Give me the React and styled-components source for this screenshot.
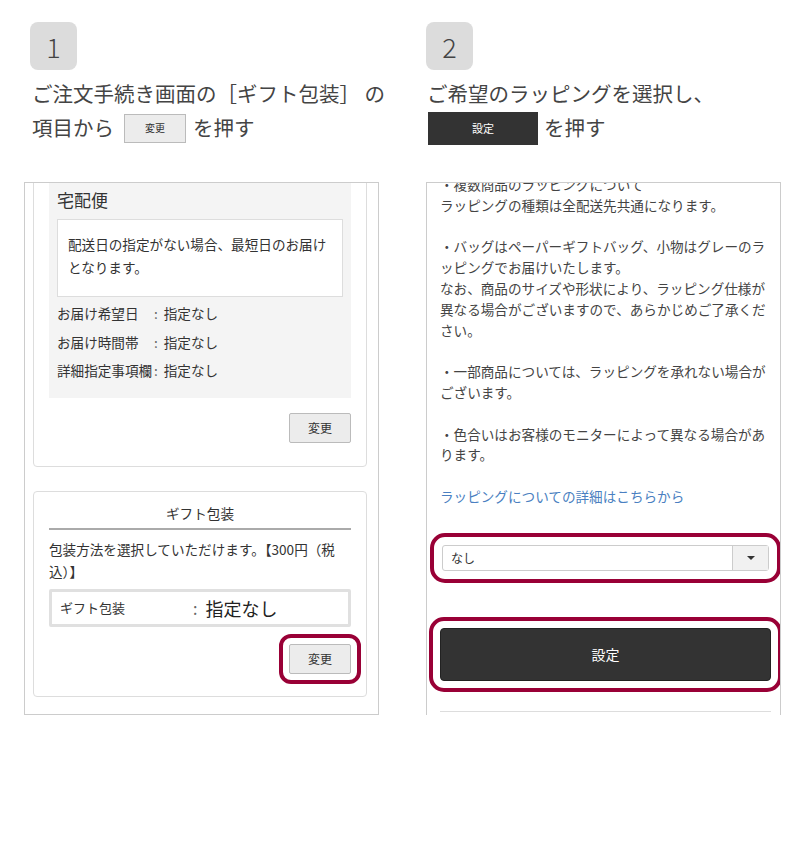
import styled, { createGlobalStyle } from 'styled-components';

const GlobalStyle = createGlobalStyle`
  body {
    margin: 0;
    background: #fff;
    font-family: "Noto Sans CJK JP", "Noto Sans", sans-serif;
    color: #333;
  }
`;

const Page = styled.div`
  display: flex;
  gap: 47px;
  padding: 22px 0 0 24px;
  width: 800px;
  height: 853px;
  box-sizing: border-box;
`;

const Column = styled.div`
  width: 355px;
  display: flex;
  flex-direction: column;
`;

const StepBadge = styled.div`
  width: 47px;
  height: 48px;
  margin-left: ${(props) => props.offset || 0}px;
  border-radius: 8px;
  background: #dcdcdc;
  color: #444;
  font-size: 27px;
  font-weight: 300;
  display: flex;
  align-items: center;
  justify-content: center;
`;

const StepText = styled.div`
  margin: 6px 0 0 ${(props) => props.offset || 0}px;
  font-size: 20.5px;
  line-height: 34px;
  color: #444;
  white-space: nowrap;
  height: 68px;
`;

const InlineButton = styled.span`
  display: inline-flex;
  align-items: center;
  justify-content: center;
  vertical-align: middle;
  box-sizing: border-box;
  font-size: 11px;
  line-height: 1;
  position: relative;
  top: -2px;
  ${(props) =>
    props.dark
      ? `
    width: 110px;
    height: 33px;
    margin: 0 6px 0 1px;
    background: #333;
    color: #fff;
  `
      : `
    width: 62px;
    height: 29px;
    margin: 0 7px 0 10px;
    background: #ececec;
    border: 1px solid #bbb;
    color: #333;
    font-size: 10px;
  `}
`;

const Panel = styled.div`
  margin-top: 38px;
  height: 533px;
  box-sizing: border-box;
  border: 1px solid #ccc;
  border-bottom: ${(props) => (props.open ? 'none' : '1px solid #ccc')};
  overflow: hidden;
  padding: ${(props) => props.pad};
`;

const Card = styled.div`
  border: 1px solid #ddd;
  border-radius: 4px;
  padding: ${(props) => props.pad || '15px'};
  margin-top: ${(props) => props.top || 0}px;
`;

const GrayBox = styled.div`
  background: #f4f4f4;
  padding: 8px 8px 13px;
`;

const ShipTitle = styled.div`
  font-size: 17px;
  line-height: 26px;
  margin-bottom: 6px;
`;

const Notice = styled.div`
  background: #fff;
  border: 1px solid #ddd;
  padding: 13px 10px 17px;
  font-size: 13.6px;
  line-height: 23px;
`;

const InfoRows = styled.div`
  margin-top: 2px;
`;

const InfoRow = styled.div`
  display: flex;
  font-size: 13.6px;
  line-height: 28.5px;
`;

const InfoLabel = styled.span`
  width: 97px;
`;

const Colon = styled.span`
  color: #666;
  margin-right: ${(props) => props.gap || 6}px;
`;

const ButtonRow = styled.div`
  display: flex;
  justify-content: flex-end;
  margin-top: ${(props) => props.top}px;
`;

const ChangeButton = styled.button`
  width: 62px;
  height: 30px;
  box-sizing: border-box;
  border: 1px solid #bbb;
  border-radius: 2px;
  background: #ececec;
  color: #333;
  font-family: inherit;
  font-size: 12px;
  padding: 0;
  ${(props) => props.marked && 'outline: 4px solid #990036; outline-offset: 6px;'}
`;

const CardTitle = styled.div`
  text-align: center;
  font-size: 13.6px;
  line-height: 20px;
  padding-bottom: 5px;
  border-bottom: 2px solid #aaa;
`;

const CardText = styled.div`
  margin-top: 8px;
  font-size: 13.6px;
  line-height: 22px;
`;

const SelectedBox = styled.div`
  margin-top: 7px;
  height: 38px;
  box-sizing: border-box;
  border: 3px solid #e0e0e0;
  border-radius: 2px;
  display: flex;
  align-items: center;
  padding: 0 8px;
`;

const SelectedLabel = styled.span`
  width: 133px;
  font-size: 13px;
`;

const SelectedValue = styled.span`
  font-size: 18px;
  color: #222;
`;

const NoteText = styled.div`
  margin-top: -9px;
  font-size: 13.6px;
  line-height: 20.8px;
  color: #444;
  white-space: nowrap;
`;

const Link = styled.a`
  color: #4a7fc1;
  text-decoration: none;
`;

const SelectBox = styled.div`
  margin: 38px 2px 0;
  height: 26px;
  box-sizing: border-box;
  border: 1px solid #ccc;
  border-radius: 3px;
  display: flex;
  background: #fff;
  outline: 4px solid #990036;
  outline-offset: 8px;
`;

const SelectValue = styled.span`
  flex: 1;
  font-size: 12px;
  line-height: 24px;
  padding-left: 8px;
  color: #333;
`;

const SelectCaret = styled.span`
  width: 35px;
  border-left: 1px solid #ccc;
  background: #f1f1f1;
  display: flex;
  align-items: center;
  justify-content: center;

  &::after {
    content: '';
    border-left: 4px solid transparent;
    border-right: 4px solid transparent;
    border-top: 4px solid #333;
  }
`;

const SubmitButton = styled.button`
  display: block;
  width: 100%;
  height: 53px;
  margin-top: 57px;
  border: 1px solid #222;
  border-radius: 4px;
  background: #333;
  color: #fff;
  font-family: inherit;
  font-size: 14px;
  outline: 4px solid #990036;
  outline-offset: 7px;
`;

const Divider = styled.div`
  margin-top: 30px;
  border-top: 1px solid #ddd;
`;

const App = () => {
  return (
    <>
      <GlobalStyle />
      <Page>
        <Column>
          <StepBadge offset={6}>1</StepBadge>
          <StepText offset={8}>
            ご注文手続き画面の［ギフト包装］ の
            <br />
            項目から<InlineButton>変更</InlineButton>を押す
          </StepText>
          <Panel pad="0 11px 0 8px">
            <Card top={-20} pad="15px 15px 23px">
              <GrayBox>
                <ShipTitle>宅配便</ShipTitle>
                <Notice>
                  配送日の指定がない場合、最短日のお届け
                  <br />
                  となります。
                </Notice>
                <InfoRows>
                  <InfoRow>
                    <InfoLabel>お届け希望日</InfoLabel>
                    <Colon>:</Colon>指定なし
                  </InfoRow>
                  <InfoRow>
                    <InfoLabel>お届け時間帯</InfoLabel>
                    <Colon>:</Colon>指定なし
                  </InfoRow>
                  <InfoRow>
                    <InfoLabel>詳細指定事項欄</InfoLabel>
                    <Colon>:</Colon>指定なし
                  </InfoRow>
                </InfoRows>
              </GrayBox>
              <ButtonRow top={15}>
                <ChangeButton>変更</ChangeButton>
              </ButtonRow>
            </Card>
            <Card top={24} pad="11px 15px 22px">
              <CardTitle>ギフト包装</CardTitle>
              <CardText>
                包装方法を選択していただけます。【300円（税
                <br />
                込）】
              </CardText>
              <SelectedBox>
                <SelectedLabel>ギフト包装</SelectedLabel>
                <Colon gap={8}>:</Colon>
                <SelectedValue>指定なし</SelectedValue>
              </SelectedBox>
              <ButtonRow top={17}>
                <ChangeButton marked>変更</ChangeButton>
              </ButtonRow>
            </Card>
          </Panel>
        </Column>

        <Column>
          <StepBadge>2</StepBadge>
          <StepText offset={1}>
            ご希望のラッピングを選択し、
            <br />
            <InlineButton dark>設定</InlineButton>を押す
          </StepText>
          <Panel open pad="0 9px 0 13px">
            <NoteText>
              ・複数商品のラッピングについて
              <br />
              ラッピングの種類は全配送先共通になります。
              <br />
              <br />
              ・バッグはペーパーギフトバッグ、小物はグレーのラ
              <br />
              ッピングでお届けいたします。
              <br />
              なお、商品のサイズや形状により、ラッピング仕様が
              <br />
              異なる場合がございますので、あらかじめご了承くだ
              <br />
              さい。
              <br />
              <br />
              ・一部商品については、ラッピングを承れない場合が
              <br />
              ございます。
              <br />
              <br />
              ・色合いはお客様のモニターによって異なる場合があ
              <br />
              ります。
              <br />
              <br />
              <Link href="#">ラッピングについての詳細はこちらから</Link>
            </NoteText>
            <SelectBox>
              <SelectValue>なし</SelectValue>
              <SelectCaret />
            </SelectBox>
            <SubmitButton>設定</SubmitButton>
            <Divider />
          </Panel>
        </Column>
      </Page>
    </>
  );
};

export default App;
